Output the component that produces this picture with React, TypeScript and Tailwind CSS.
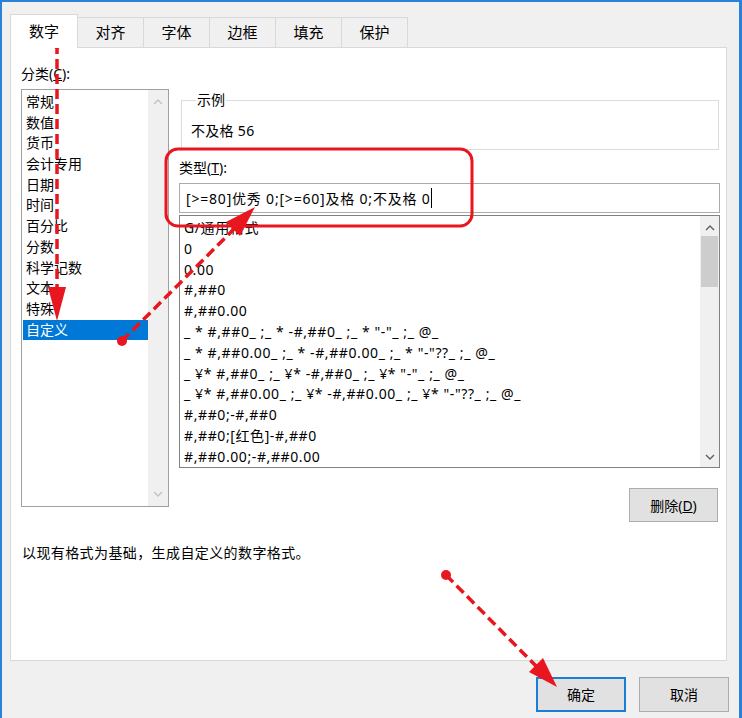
import React from 'react'

const categories = ['常规', '数值', '货币', '会计专用', '日期', '时间', '百分比', '分数', '科学记数', '文本', '特殊', '自定义']

const formats = [
  'G/通用格式',
  '0',
  '0.00',
  '#,##0',
  '#,##0.00',
  '_ * #,##0_ ;_ * -#,##0_ ;_ * "-"_ ;_ @_',
  '_ * #,##0.00_ ;_ * -#,##0.00_ ;_ * "-"??_ ;_ @_',
  '_ ¥* #,##0_ ;_ ¥* -#,##0_ ;_ ¥* "-"_ ;_ @_',
  '_ ¥* #,##0.00_ ;_ ¥* -#,##0.00_ ;_ ¥* "-"??_ ;_ @_',
  '#,##0;-#,##0',
  '#,##0;[红色]-#,##0',
  '#,##0.00;-#,##0.00',
]

const tabs = ['对齐', '字体', '边框', '填充', '保护']

function Chevron({ up, color }: { up?: boolean; color: string }) {
  return (
    <svg width="10" height="6" viewBox="0 0 10 6" className="block">
      <polyline
        points={up ? '1,5 5,1 9,5' : '1,1 5,5 9,1'}
        fill="none"
        stroke={color}
        strokeWidth="1.4"
      />
    </svg>
  )
}

function Button({ children, focused }: { children: React.ReactNode; focused?: boolean }) {
  return (
    <div
      className={
        focused
          ? 'w-[90px] h-[35px] flex items-center justify-center bg-[#e1e1e1] border-2 border-[#1a7fd4] text-[14px]'
          : 'w-[90px] h-[35px] flex items-center justify-center bg-[#e1e1e1] border border-[#adadad] text-[14px]'
      }
    >
      {children}
    </div>
  )
}

// red annotation arrows drawn on top of the dialog
function Annotations() {
  const red = '#e8161e'
  return (
    <svg className="absolute top-0 left-0 pointer-events-none" width="742" height="718" viewBox="0 0 742 718">
      <g stroke={red} strokeWidth="3.5" strokeDasharray="10 5" fill="none">
        <line x1="57" y1="44" x2="57" y2="290" />
        <line x1="122" y1="341" x2="236" y2="227" />
        <line x1="446" y1="575" x2="537" y2="667" />
      </g>
      <g fill={red}>
        <circle cx="57" cy="44" r="5" />
        <polygon points="48,287 66,287 57,321" />
        <circle cx="122" cy="341" r="5" />
        <polygon points="255,207 240,236 226,222" />
        <circle cx="446" cy="575" r="5" />
        <polygon points="557,687 529,672 543,658" />
      </g>
      <rect x="166" y="149" width="306" height="77" rx="12" fill="none" stroke={red} strokeWidth="3" />
    </svg>
  )
}

export default function App() {
  return (
    <div className="relative w-[742px] h-[718px] overflow-hidden text-black font-['Noto_Sans','Noto_Sans_CJK_SC',sans-serif]">
      <div className="w-[742px] h-[718px] bg-[#f0f0f0] border-t-2 border-l-2 border-r-[3px] border-[#2a82d6] flex flex-col">
        {/* tabs */}
        <div className="ml-[8px] mt-[12px] h-[33px] flex items-end">
          <div className="relative z-10 -mb-px w-[68px] h-[34px] bg-white border border-b-0 border-[#d9d9d9] flex items-center justify-center text-[15px]">
            数字
          </div>
          {tabs.map((t) => (
            <div
              key={t}
              className="w-[66px] h-[30px] bg-[#f0f0f0] border border-l-0 border-b-0 border-[#d9d9d9] flex items-center justify-center text-[15px]"
            >
              {t}
            </div>
          ))}
        </div>

        {/* tab panel */}
        <div className="ml-[8px] w-[717px] h-[614px] bg-white border border-[#d9d9d9] flex flex-col text-[14px]">
          <div className="flex">
            {/* category column */}
            <div className="ml-[10px] pt-[18px] flex flex-col">
              <div className="leading-[16px]">
                分类(<span className="underline">C</span>):
              </div>
              <div className="mt-[7px] w-[148px] h-[418px] border border-[#a0a0a0] flex">
                <div className="flex-1 pt-[2px] pl-[1px]">
                  {categories.map((c) => (
                    <div
                      key={c}
                      className={
                        c === '自定义'
                          ? 'h-[20.7px] leading-[20.7px] pl-[3px] bg-[#0078d7] text-white'
                          : 'h-[20.7px] leading-[20.7px] pl-[3px]'
                      }
                    >
                      {c}
                    </div>
                  ))}
                </div>
                <div className="w-[20px] bg-[#f0f0f0] flex flex-col items-center justify-between py-[9px]">
                  <Chevron up color="#c2c2c2" />
                  <Chevron color="#c2c2c2" />
                </div>
              </div>
            </div>

            {/* type column */}
            <div className="ml-[10px] pt-[44px] w-[541px] flex flex-col">
              <fieldset className="ml-[2px] w-[538px] h-[58px] border border-[#dcdcdc] pl-[9px]">
                <legend className="ml-[5px] px-[1px] leading-[16px]">示例</legend>
                <div className="mt-[15px] leading-[16px] tracking-[0.3px]">不及格 56</div>
              </fieldset>
              <div className="mt-[10px] leading-[16px]">
                类型(<span className="underline">T</span>):
              </div>
              <div className="mt-[7px] h-[30px] border border-[#ababab] flex items-center pl-[6px]">
                <span className="tracking-[0.8px]">[&gt;=80]优秀 0;[&gt;=60]及格 0;不及格 0</span>
                <span className="w-px h-[20px] bg-black" />
              </div>
              <div className="mt-[2px] h-[253px] border border-[#828282] flex">
                <div className="flex-1 pt-[2px] pl-[4px] overflow-hidden tracking-[0.6px]">
                  {formats.map((f) => (
                    <div key={f} className="h-[20.8px] leading-[20.8px] whitespace-pre">
                      {f}
                    </div>
                  ))}
                </div>
                <div className="w-[19px] bg-[#f0f0f0] flex flex-col items-center pt-[9px] pb-[7px]">
                  <Chevron up color="#606060" />
                  <div className="mt-[5px] w-[17px] h-[51px] bg-[#cdcdcd]" />
                  <div className="flex-1" />
                  <Chevron color="#606060" />
                </div>
              </div>
              <div className="mt-[20px] mr-[2px] self-end">
                <div className="w-[89px] h-[34px] flex items-center justify-center bg-[#e1e1e1] border border-[#adadad]">
                  删除(<span className="underline">D</span>)
                </div>
              </div>
            </div>
          </div>
          <div className="ml-[11px] mt-[23px] leading-[16px] tracking-[0.4px]">以现有格式为基础，生成自定义的数字格式。</div>
        </div>

        {/* dialog buttons */}
        <div className="mt-[16px] pr-[10px] flex justify-end gap-[13px]">
          <Button focused>确定</Button>
          <Button>取消</Button>
        </div>
      </div>
      <Annotations />
    </div>
  )
}
